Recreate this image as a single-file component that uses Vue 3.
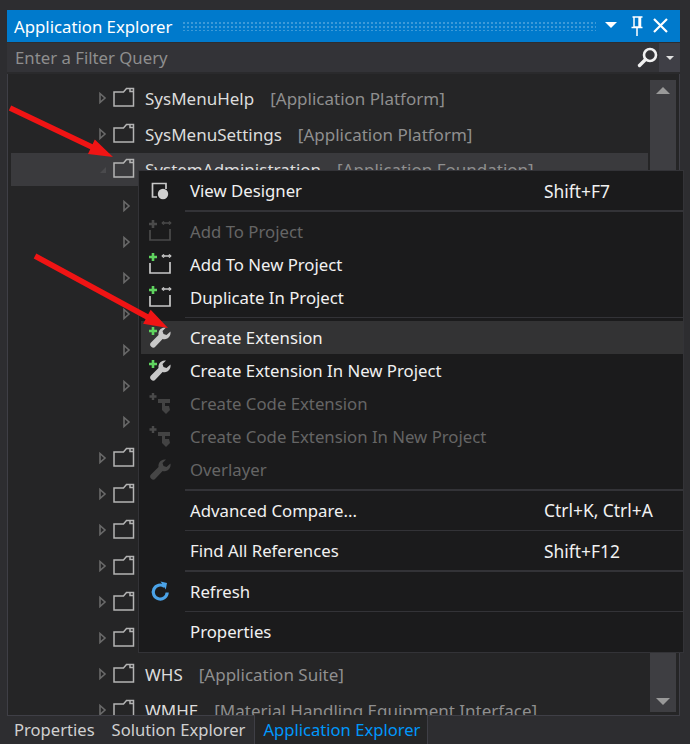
<script setup>
const rows = [
  { depth: 0, name: 'SysMenuHelp', tag: '[Application Platform]' },
  { depth: 0, name: 'SysMenuSettings', tag: '[Application Platform]' },
  { depth: 0, name: 'SystemAdministration', tag: '[Application Foundation]', open: true, selected: true },
  { depth: 1 }, { depth: 1 }, { depth: 1 }, { depth: 1 }, { depth: 1 }, { depth: 1 }, { depth: 1 },
  { depth: 0 }, { depth: 0 }, { depth: 0 }, { depth: 0 }, { depth: 0 }, { depth: 0 },
  { depth: 0, name: 'WHS', tag: '[Application Suite]' },
  { depth: 0, name: 'WMHE', tag: '[Material Handling Equipment Interface]' }
]
const menu = [
  { label: 'View Designer', key: 'Shift+F7', icon: 'designer' },
  { sep: true },
  { label: 'Add To Project', icon: 'add', off: true },
  { label: 'Add To New Project', icon: 'add' },
  { label: 'Duplicate In Project', icon: 'add' },
  { sep: true },
  { label: 'Create Extension', icon: 'wrenchPlus', hover: true },
  { label: 'Create Extension In New Project', icon: 'wrenchPlus' },
  { label: 'Create Code Extension', icon: 'code', off: true },
  { label: 'Create Code Extension In New Project', icon: 'code', off: true },
  { label: 'Overlayer', icon: 'wrench', off: true },
  { sep: true },
  { label: 'Advanced Compare...', key: 'Ctrl+K, Ctrl+A' },
  { sep: true },
  { label: 'Find All References', key: 'Shift+F12' },
  { sep: true },
  { label: 'Refresh', icon: 'refresh' },
  { sep: true },
  { label: 'Properties' }
]
const wrench = 'M23.500 6.500A6.500 6.500 0 0 1 15.600 14L8.500 21.500A2.800 2.800 0 0 1 4 17.500L11.500 10A6.500 6.500 0 0 1 19 2.500L15.500 6 16.500 9 19.500 10z'
</script>

<template>
  <div class="page">
    <section class="panel">
      <header class="title">
        <span class="title-text">Application Explorer</span>
        <span class="dots"></span>
        <svg class="title-ico" width="70" height="24" viewBox="0 0 70 24">
          <path d="M0 8h12l-6 6z" fill="#fff" />
          <path d="M27.500 3h10M29 3v10h6.500V3M26.500 13.500h11M32 14v8" fill="none" stroke="#fff" stroke-width="1.500" />
          <path d="M33.300 3h2.400v10h-2.400z" fill="#fff" />
          <path d="M49 5l13 13M62 5L49 18" fill="none" stroke="#fff" stroke-width="2.200" />
        </svg>
      </header>
      <div class="filter">
        <span class="filter-text">Enter a Filter Query</span>
        <svg width="24" height="24" viewBox="0 0 24 24" class="search">
          <circle cx="14" cy="9" r="6" fill="none" stroke="#f1f1f1" stroke-width="2.600" />
          <path d="M9.500 13.500L3.500 19.500" stroke="#f1f1f1" stroke-width="3.400" stroke-linecap="round" />
        </svg>
        <span class="drop"><i></i></span>
      </div>
      <div class="body">
        <div class="tree">
          <div v-for="(r, i) in rows" :key="i" class="row" :class="{ selected: r.selected, child: r.depth === 1 }">
            <svg width="10" height="14" viewBox="0 0 10 14" class="chev">
              <path v-if="r.open" d="M8 4v6H2z" fill="#4a4a4d" />
              <path v-else d="M2 2.500l5 4.500-5 4.500z" fill="none" stroke="#6a6a6a" stroke-width="1.600" />
            </svg>
            <svg v-if="r.depth === 0" width="22" height="20" viewBox="0 0 22 20" class="folder">
              <path d="M1 5v14h19.500V1.500h-7L10.500 5H1zM17 1.500v3h3.500" fill="none" stroke="#b4b4b4" stroke-width="1.500" />
            </svg>
            <span v-if="r.name" class="name">{{ r.name }}</span>
            <span v-if="r.tag" class="tag">{{ r.tag }}</span>
          </div>
        </div>
        <div class="scroll">
          <i class="up"></i>
          <i class="down"></i>
        </div>
      </div>
    </section>
    <nav class="tabs">
      <span class="tab">Properties</span>
      <span class="tab">Solution Explorer</span>
      <span class="tab active">Application Explorer</span>
    </nav>

    <div class="menu">
      <template v-for="(m, i) in menu" :key="i">
        <div v-if="m.sep" class="sep"></div>
        <div v-else class="item" :class="{ off: m.off, hover: m.hover }">
          <span class="ico">
            <svg v-if="m.icon" width="26" height="26" viewBox="0 0 26 26">
              <template v-if="m.icon === 'designer'">
                <path d="M19 11V5.500H5.500V19H10" fill="none" stroke="#c8c8c8" stroke-width="1.700" />
                <circle cx="16" cy="16" r="5.200" fill="#d0d0d0" />
              </template>
              <template v-else-if="m.icon === 'add'">
                <path d="M3 12v10h20V11M17 5h5M17 3.500L15.500 5l1.500 1.500M22 3.500L23.500 5 22 6.500" fill="none" :stroke="m.off ? '#4a4a4a' : '#c8c8c8'" stroke-width="1.700" />
                <path d="M6 2v8M2 6h8" fill="none" :stroke="m.off ? '#4a4a4a' : '#5fd35f'" stroke-width="2.600" />
              </template>
              <template v-else-if="m.icon === 'wrenchPlus'">
                <path :d="wrench" fill="#c8c8c8" />
                <path d="M6 2v8M2 6h8" fill="none" stroke="#5fd35f" stroke-width="2.600" />
              </template>
              <template v-else-if="m.icon === 'code'">
                <path d="M6 2v7M2.500 5.500h7" stroke="#4a4a4a" stroke-width="2.400" fill="none" />
                <path d="M11 8h12v4h-5v4h-3v-4h-4zM15 15h7l1 4-4 4-4-4z" fill="#434343" />
              </template>
              <path v-else-if="m.icon === 'wrench'" :d="wrench" fill="#464646" />
              <template v-else-if="m.icon === 'refresh'">
                <path d="M17.500 8.500a7 7 0 1 0 2.700 6" fill="none" stroke="#4ba3e8" stroke-width="3.200" />
                <path d="M13.500 3.500l6.500 1.500-1.200 6.500z" fill="#4ba3e8" />
              </template>
            </svg>
          </span>
          <span class="label">{{ m.label }}</span>
          <span v-if="m.key" class="key">{{ m.key }}</span>
        </div>
      </template>
    </div>

    <svg class="arrows" width="690" height="744" viewBox="0 0 690 744">
      <g fill="#f01414">
        <path d="M11.200 105.500L92.600 144.200 94.800 139.500 113 157 88 153.900 90.200 149.200 8.800 110.500z" />
        <path d="M36.300 253.500L148.200 314.200 150.700 309.700 168 328 143.100 323.700 145.600 319.200 33.700 258.500z" />
      </g>
    </svg>
  </div>
</template>

<style scoped>
.page {
  position: relative;
  width: 690px;
  height: 744px;
  overflow: hidden;
  background: #2d2d30;
  font-family: "Noto Sans", sans-serif;
  font-size: 16.750px;
  color: #f1f1f1;
  padding: 10px 10px 0 7px;
  box-sizing: border-box;
}
.panel {
  height: 705px;
  display: flex;
  flex-direction: column;
  border-bottom: 1px solid #3f3f46;
}
.title {
  height: 32px;
  flex: none;
  background: #007acc;
  display: flex;
  align-items: center;
  padding: 0 5px 0 7px;
  color: #fff;
}
.title-text {
  white-space: nowrap;
}
.dots {
  flex: 1;
  height: 9px;
  margin: 0 9px 0 11px;
  background-image: radial-gradient(circle at 1px 1px, #3d9ad8 0.8px, transparent 1px);
  background-size: 4px 4px;
}
.title-ico {
  flex: none;
}
.filter {
  height: 29px;
  flex: none;
  margin-top: 1px;
  background: #333337;
  display: flex;
  align-items: center;
  padding-left: 8px;
  color: #8e8e8e;
  border-bottom: 2px solid #2a2a2c;
}
.filter-text {
  flex: 1;
}
.search {
  margin-right: -1px;
}
.drop {
  width: 21px;
  height: 29px;
  background: #3f3f46;
  display: flex;
  align-items: center;
  justify-content: center;
}
.drop i {
  width: 0;
  height: 0;
  border: 4px solid transparent;
  border-top: 4px solid #e0e0e0;
  border-bottom: 0;
}
.body {
  flex: 1;
  min-height: 0;
  display: flex;
  background: #252526;
  border-left: 1px solid #3f3f46;
  border-right: 1px solid #3f3f46;
  padding: 6px 3px 0 3px;
}
.tree {
  flex: 1;
  min-width: 0;
  overflow: hidden;
}
.row {
  height: 36px;
  display: flex;
  align-items: center;
  padding-left: 87px;
  white-space: nowrap;
  box-sizing: border-box;
  font-size: 17px;
}
.row.child {
  padding-left: 111px;
}
.row.selected {
  background: #3a3a3d;
  height: 33px;
  margin: 1px 0 2px;
}
.chev {
  flex: none;
}
.folder {
  flex: none;
  margin-left: 5px;
  margin-top: -3px;
}
.name {
  margin-left: 10px;
  color: #dcdcdc;
}
.tag {
  margin-left: 16px;
  color: #8f8f8f;
}
.scroll {
  width: 26px;
  flex: none;
  background: #3e3e42;
  margin-left: 2px;
  display: flex;
  flex-direction: column;
  justify-content: space-between;
  align-items: center;
  padding: 7px 0;
  box-sizing: border-box;
  height: 632px;
}
.up {
  width: 0;
  height: 0;
  border: 7px solid transparent;
  border-bottom: 7px solid #999;
  border-top: 0;
}
.down {
  width: 0;
  height: 0;
  border: 7px solid transparent;
  border-top: 7px solid #999;
  border-bottom: 0;
}
.tabs {
  display: flex;
  height: 29px;
  align-items: stretch;
  margin-left: -1px;
  font-size: 16.600px;
}
.tab {
  padding: 0 9px 0 8px;
  line-height: 27px;
  color: #d0d0d0;
}
.tab.active {
  color: #0097fb;
  background: #252526;
  border: 1px solid #3f3f46;
  border-top: 0;
  margin-top: -1px;
  padding: 1px 7px 0 8px;
}
.menu {
  position: absolute;
  left: 138px;
  top: 170px;
  width: 546px;
  height: 483px;
  box-sizing: border-box;
  padding: 3px 0 4px 2px;
  background: #1b1b1c;
  border: 1px solid #333337;
  color: #f1f1f1;
}
.sep {
  height: 1.500px;
  margin: 3px 0 3px 44px;
  background: #333337;
}
.item {
  height: 33px;
  display: flex;
  align-items: center;
  white-space: nowrap;
}
.item.hover {
  background: #333334;
}
.item.off {
  color: #656565;
}
.ico {
  width: 49px;
  flex: none;
  height: 26px;
  padding-left: 6px;
  box-sizing: border-box;
}
.label {
  width: 354px;
  flex: none;
}
.key {
  flex: none;
  font-size: 17.400px;
}
.arrows {
  position: absolute;
  left: 0;
  top: 0;
  pointer-events: none;
}
</style>
